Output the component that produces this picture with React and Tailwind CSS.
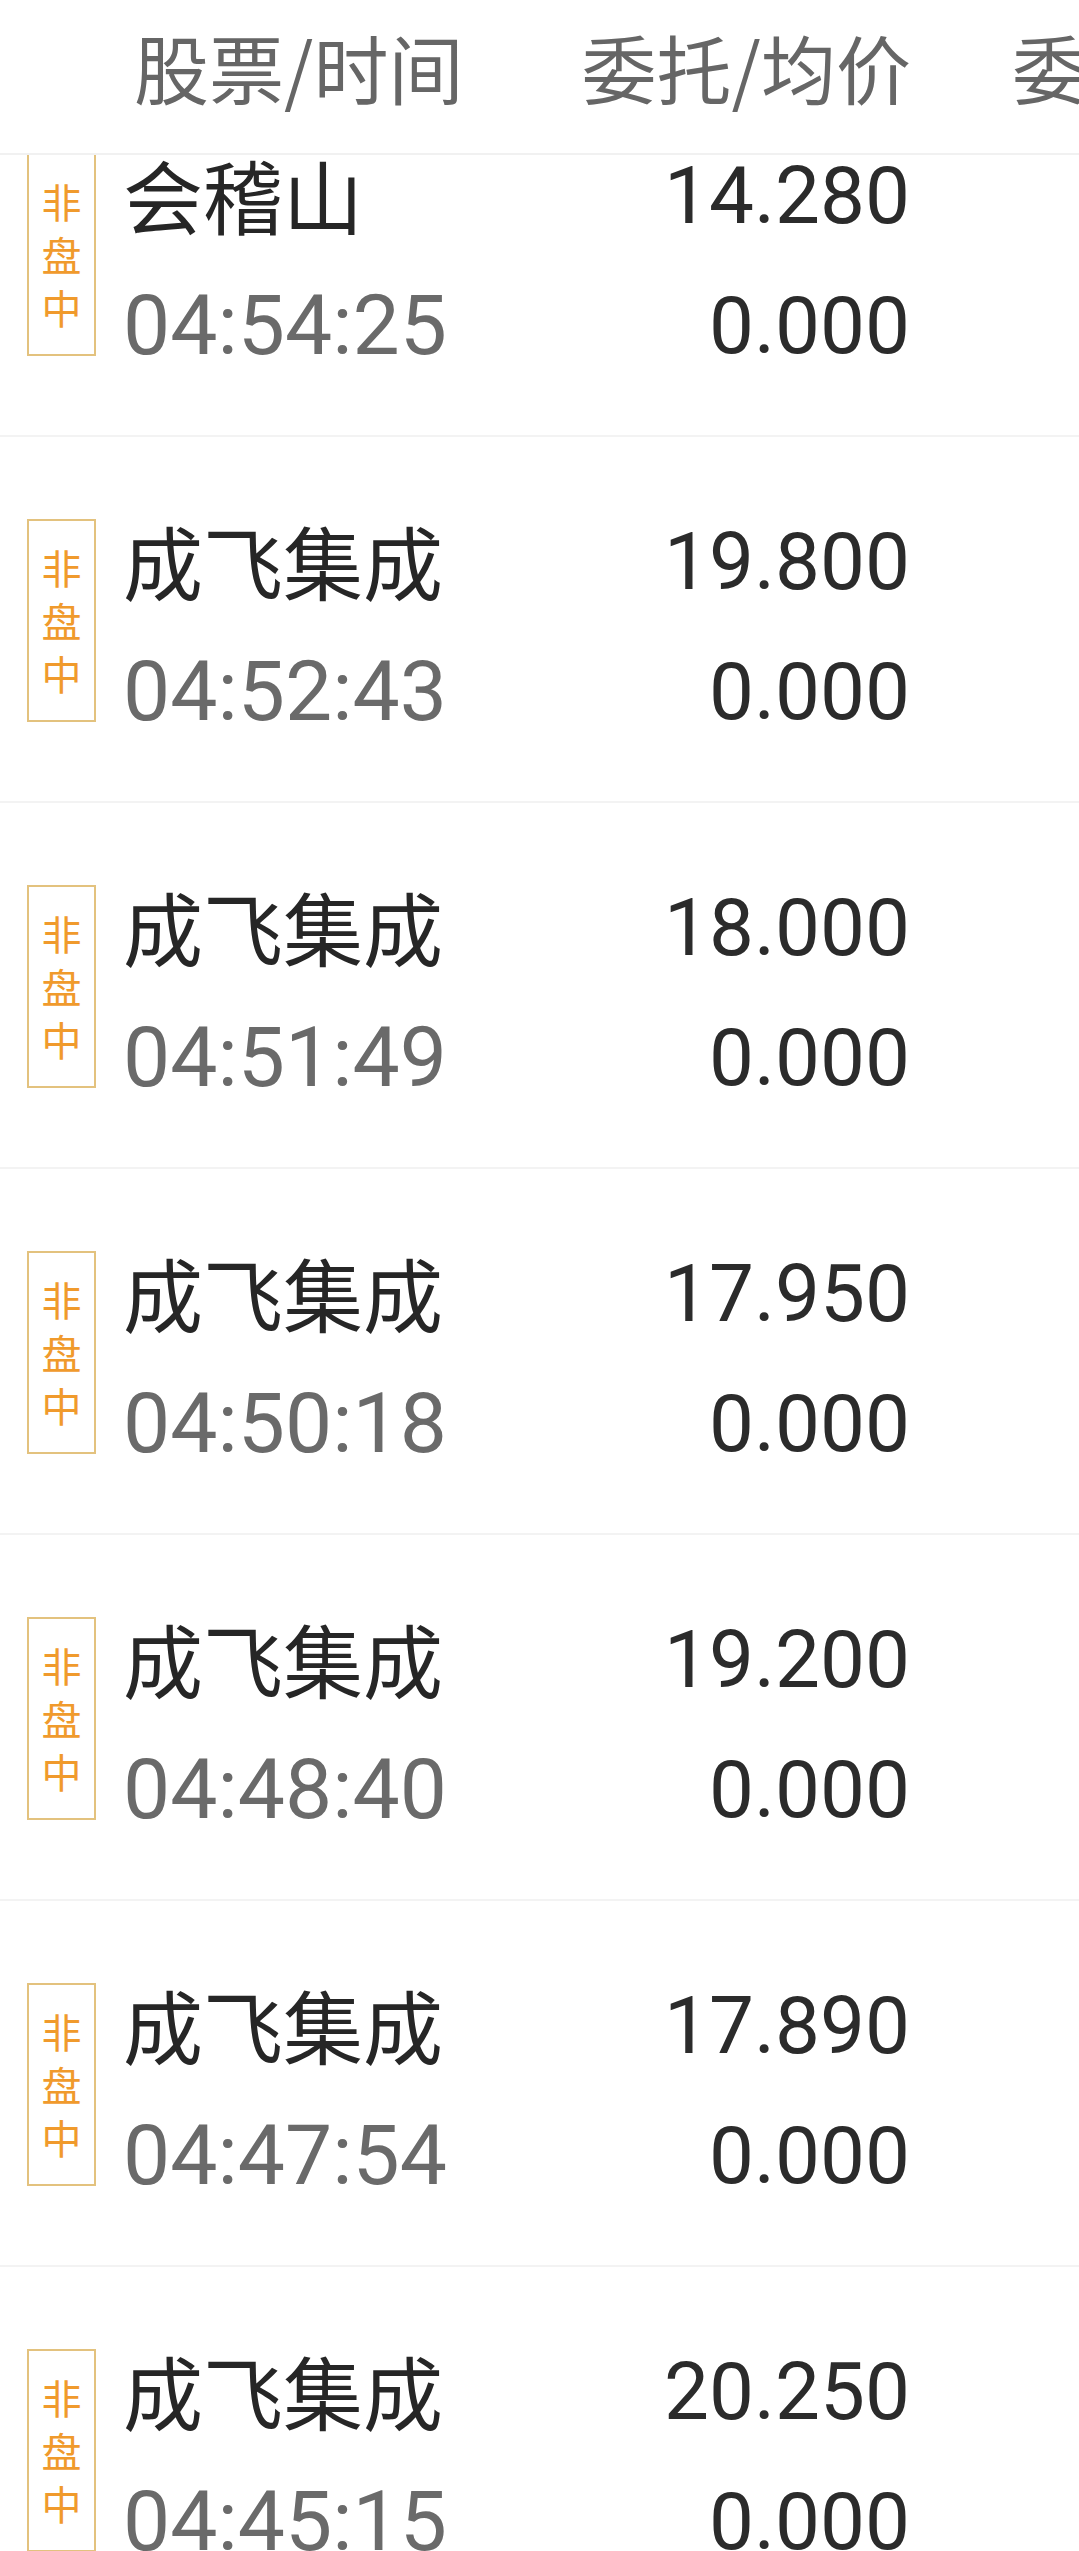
import React from 'react';

const rows = [
  { name: '会稽山', time: '04:54:25', price: '14.280', avg: '0.000' },
  { name: '成飞集成', time: '04:52:43', price: '19.800', avg: '0.000' },
  { name: '成飞集成', time: '04:51:49', price: '18.000', avg: '0.000' },
  { name: '成飞集成', time: '04:50:18', price: '17.950', avg: '0.000' },
  { name: '成飞集成', time: '04:48:40', price: '19.200', avg: '0.000' },
  { name: '成飞集成', time: '04:47:54', price: '17.890', avg: '0.000' },
  { name: '成飞集成', time: '04:45:15', price: '20.250', avg: '0.000' },
];

const cjk = "font-['Noto_Sans_CJK_SC',sans-serif]";
const num = "font-['Roboto','Noto_Sans_CJK_SC',sans-serif]";

// 非盘中 标签
const Badge = () => (
  <div className={`mt-[82px] flex h-[203px] w-[69px] shrink-0 flex-col items-center justify-center border-2 border-[#e3c27e] text-[40px] leading-[53px] text-[#f09a2c] ${cjk}`}>
    <span>非</span>
    <span>盘</span>
    <span>中</span>
  </div>
);

const OrderRow = ({ item }) => (
  <div className="flex h-[366px] border-b-2 border-[#f3f3f3] pl-[27px] pr-[169px]">
    <Badge />
    <div className="ml-[27px] mt-[57px] flex flex-1 flex-col whitespace-nowrap">
      <span className={`text-[80px] leading-[130px] text-[#262626] ${cjk}`}>{item.name}</span>
      <span className={`mt-[3px] text-[84px] leading-[130px] text-[#6a6a6a] ${num}`}>{item.time}</span>
    </div>
    <div className={`mt-[60px] flex flex-col items-end whitespace-nowrap text-[80px] leading-[130px] text-[#2b2b2b] ${num}`}>
      <span>{item.price}</span>
      <span>{item.avg}</span>
    </div>
  </div>
);

export default function App() {
  return (
    <div className="h-[2551px] w-[1079px] overflow-hidden bg-white">
      {/* 表头 */}
      <div className={`flex h-[155px] items-start overflow-hidden whitespace-nowrap border-b-2 border-[#f1f1f1] pl-[134px] pt-[29px] text-[75px] leading-none text-[#666666] ${cjk}`}>
        <div className="w-[440px] shrink-0">股票/时间</div>
        <div className="w-[337px] shrink-0 text-right">委托/均价</div>
        <div className="ml-[101px] shrink-0">委托/成交</div>
      </div>

      {/* 列表（已滚动） */}
      <div className="overflow-hidden">
        <div className="-mt-[84px]">
          {rows.map((item, i) => (
            <OrderRow key={i} item={item} />
          ))}
        </div>
      </div>
    </div>
  );
}
